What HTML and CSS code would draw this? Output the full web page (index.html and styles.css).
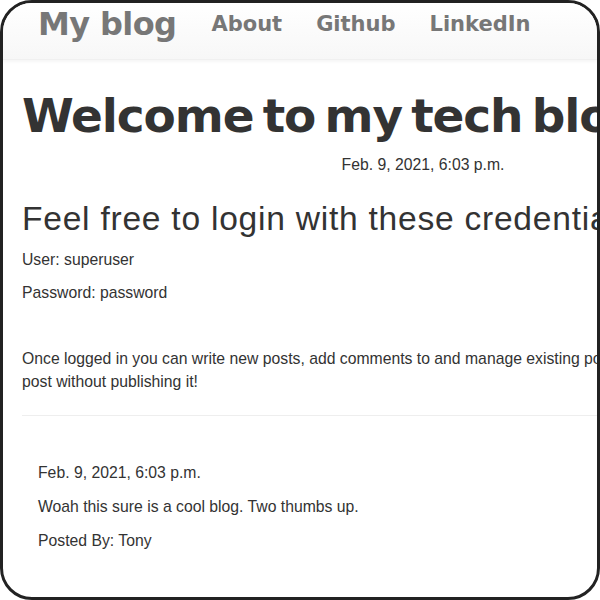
FILE: index.html
```html
<!DOCTYPE html>
<html lang="en">
<head>
<meta charset="utf-8">
<title>My blog</title>
<link rel="stylesheet" href="styles.css">
</head>
<body>
<div class="frame">
  <header class="topbar">
    <a class="brand" href="#">My blog</a>
    <nav class="nav">
      <a href="#">About</a>
      <a href="#">Github</a>
      <a href="#">LinkedIn</a>
    </nav>
  </header>
  <main class="content">
    <h1 class="title">Welcome to my tech blog!</h1>
    <p class="date">Feb. 9, 2021, 6:03 p.m.</p>
    <h2 class="subtitle">Feel free to login with these credentials:</h2>
    <p>User: superuser</p>
    <p>Password: password</p>
    <p>&nbsp;</p>
    <p>Once logged in you can write new posts, add comments to and manage existing posts. You can also save a draft<br>post without publishing it!</p>
    <hr class="divider">
    <section class="comment">
      <p class="comment-date">Feb. 9, 2021, 6:03 p.m.</p>
      <p>Woah this sure is a cool blog. Two thumbs up.</p>
      <p>Posted By: Tony</p>
    </section>
  </main>
</div>
</body>
</html>
```
FILE: styles.css
```css
html, body {
  margin: 0;
  padding: 0;
  background: #ffffff;
}

.frame {
  width: 600px;
  height: 600px;
  box-sizing: border-box;
  border: 3px solid #222222;
  border-radius: 32px;
  overflow: hidden;
  background: #ffffff;
  font-family: "Liberation Sans", Arial, sans-serif;
  color: #333333;
}

.topbar {
  height: 57px;
  box-sizing: border-box;
  display: flex;
  align-items: flex-start;
  padding: 5px 0 0 35px;
  gap: 35px;
  background: linear-gradient(#ffffff, #f7f7f7);
  box-shadow: 0 2px 3px rgba(0, 0, 0, 0.04);
  border-bottom: 1px solid #f0f0f0;
  font-family: "DejaVu Sans", sans-serif;
  font-weight: bold;
}

.brand {
  color: #777777;
  text-decoration: none;
  font-size: 32px;
  line-height: 32px;
  letter-spacing: -0.6px;
}

.nav {
  display: flex;
  gap: 34px;
  margin-top: 6px;
}

.nav a {
  color: #777777;
  text-decoration: none;
  font-size: 21px;
  line-height: 21px;
}

.content {
  width: 802px;
  padding: 0 0 0 19px;
}

.title {
  margin: 28px 0 0 0;
  font-family: "DejaVu Sans", sans-serif;
  font-weight: bold;
  font-size: 47px;
  line-height: 55px;
  letter-spacing: -1.1px;
  word-spacing: -6px;
  color: #333333;
  white-space: nowrap;
}

.content p {
  margin: 10px 0 0 0;
  font-size: 15.75px;
  line-height: 23px;
}

.content .date {
  text-align: center;
}

.subtitle {
  margin: 26px 0 0 0;
  font-weight: normal;
  font-size: 33.6px;
  line-height: 34px;
  letter-spacing: 0.75px;
  white-space: nowrap;
}

.subtitle + p {
  margin-top: 12px;
}

.divider {
  margin: 22px 0 0 0;
  border: 0;
  border-top: 1px solid #eeeeee;
  height: 0;
}

.comment {
  padding: 35px 0 0 16px;
}

.comment p {
  margin-top: 11px;
}

.comment .comment-date {
  margin-top: 10px;
}
```
